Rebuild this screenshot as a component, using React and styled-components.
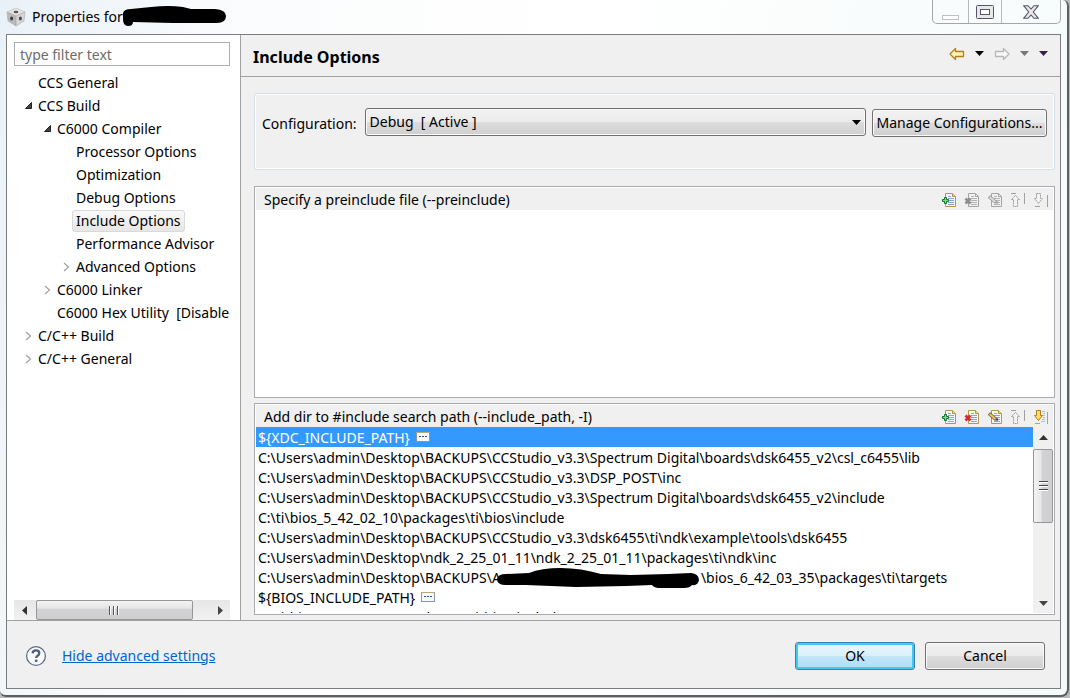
import React from 'react';
import styled, { createGlobalStyle, css } from 'styled-components';

const tree = [
    { label: 'CCS General', level: 0 },
    { label: 'CCS Build', level: 0, state: 'open' },
    { label: 'C6000 Compiler', level: 1, state: 'open' },
    { label: 'Processor Options', level: 2 },
    { label: 'Optimization', level: 2 },
    { label: 'Debug Options', level: 2 },
    { label: 'Include Options', level: 2, selected: true },
    { label: 'Performance Advisor', level: 2 },
    { label: 'Advanced Options', level: 2, state: 'closed' },
    { label: 'C6000 Linker', level: 1, state: 'closed' },
    { label: 'C6000 Hex Utility\u00a0 [Disabled]', level: 1 },
    { label: 'C/C++ Build', level: 0, state: 'closed' },
    { label: 'C/C++ General', level: 0, state: 'closed' },
];

const paths = [
    { text: '${XDC_INCLUDE_PATH}', variable: true, selected: true },
    { text: 'C:\\Users\\admin\\Desktop\\BACKUPS\\CCStudio_v3.3\\Spectrum Digital\\boards\\dsk6455_v2\\csl_c6455\\lib' },
    { text: 'C:\\Users\\admin\\Desktop\\BACKUPS\\CCStudio_v3.3\\DSP_POST\\inc' },
    { text: 'C:\\Users\\admin\\Desktop\\BACKUPS\\CCStudio_v3.3\\Spectrum Digital\\boards\\dsk6455_v2\\include' },
    { text: 'C:\\ti\\bios_5_42_02_10\\packages\\ti\\bios\\include' },
    { text: 'C:\\Users\\admin\\Desktop\\BACKUPS\\CCStudio_v3.3\\dsk6455\\ti\\ndk\\example\\tools\\dsk6455' },
    { text: 'C:\\Users\\admin\\Desktop\\ndk_2_25_01_11\\ndk_2_25_01_11\\packages\\ti\\ndk\\inc' },
    { text: 'C:\\Users\\admin\\Desktop\\BACKUPS\\', hidden: true, rest: '\\bios_6_42_03_35\\packages\\ti\\targets' },
    { text: '${BIOS_INCLUDE_PATH}', variable: true },
    { text: 'C:\\ti\\bios_6_50_01_12\\packages\\ti\\bios\\include' },
];

function Cube() {
    return (
        <svg width="20" height="20" viewBox="0 0 20 20" aria-hidden="true">
            <path d="M10 1 19 5 10 9 1 5z" fill="#e4e4e4" stroke="#bbb" strokeWidth=".6" />
            <path d="M1 5 10 9V19L2 14z" fill="#b9b9b9" stroke="#aaa" strokeWidth=".6" />
            <path d="M19 5 10 9V19L18 14z" fill="#d5d5d5" stroke="#aaa" strokeWidth=".6" />
            <ellipse cx="10" cy="5" rx="2.4" ry="1.2" fill="#555" />
            <ellipse cx="5.6" cy="11.5" rx="1.5" ry="2" fill="#3c3c3c" />
            <ellipse cx="14.4" cy="11.5" rx="1.5" ry="2" fill="#4a4a4a" />
        </svg>
    );
}

function Arrow({ left, stroke, fill }) {
    return (
        <svg width="16" height="14" viewBox="0 0 16 14" aria-hidden="true">
            <path
                d={left ? 'M1 7 6.5 1.5V4.5H14.5V9.5H6.5V12.5z' : 'M15 7 9.5 1.5V4.5H1.5V9.5H9.5V12.5z'}
                fill={fill} stroke={stroke} strokeWidth="1.3" strokeLinejoin="round"
            />
        </svg>
    );
}

function Triangle({ dir = 'down', color = '#000' }) {
    const d = {
        down: 'M0 2H9L4.5 7z',
        up: 'M0 7H9L4.5 2z',
        left: 'M7 0V9L2 4.5z',
        right: 'M2 0V9L7 4.5z',
    };
    return <svg width="9" height="9" viewBox="0 0 9 9" aria-hidden="true"><path d={d[dir]} fill={color} /></svg>;
}

function Page({ off }) {
    return (
        <>
            <path d="M4.5 1.5H11.5L14.5 4.5V14.5H4.5z" fill={off ? '#f0f0f0' : '#f3f7fd'} stroke={off ? '#a5a5a5' : '#b3954e'} />
            <path d="M11.5 1.5V4.5H14.5" fill={off ? 'none' : '#eed48b'} stroke={off ? '#a5a5a5' : '#b3954e'} />
            <path d="M7 4.5H10M7 6.5H13M7 8.5H13M7 10.5H13M7 12.5H13" stroke={off ? '#b4b4b4' : '#8ba5d2'} />
        </>
    );
}

function ToolIcon({ kind, off }) {
    const gray = '#a0a0a0';
    return (
        <svg width="16" height="16" viewBox="0 0 16 16" aria-hidden="true">
            {(kind === 'add' || kind === 'delete' || kind === 'edit') && <Page off={off} />}
            {kind === 'add' && (
                <path d="M3.5 5.5H5.5V7.5H7.5V9.5H5.5V11.5H3.5V9.5H1.5V7.5H3.5z" fill="#7be07c" stroke="#15702a" />
            )}
            {kind === 'delete' && (
                <path d="M1.5 6.5 6.5 11.5M6.5 6.5 1.5 11.5" stroke={off ? '#8e8e8e' : '#d62c38'} strokeWidth="2.8" />
            )}
            {kind === 'edit' && (
                <>
                    <path d="M2 4.5 9 10.5" stroke={off ? '#969696' : '#7b5626'} strokeWidth="3.6" />
                    <path d="M2.5 5 8.5 10" stroke={off ? '#dedede' : '#eec66c'} strokeWidth="1.8" />
                    <path d="M8 11.5H11V9z" fill={off ? gray : '#333'} />
                </>
            )}
            {kind === 'up' && (
                <>
                    <path d="M5.5 3.5 9.5 7.5H7.5V14.5H3.5V7.5H1.5z" fill="#f3f3f3" stroke={gray} strokeDasharray="2 .6" />
                    <path d="M1 1.5H6M14.5 1V12" stroke={gray} />
                </>
            )}
            {kind === 'down' && (
                <>
                    {!off && <path d="M9 2.5H12M10 4.5H12M10 6.5H12M10 8.5H12M9 10.5H12M8 12.5H12" stroke="#a9bfe0" />}
                    <path
                        d="M3.5 1.5H7.5V6.5H9.5L5.5 11.5 1.5 6.5H3.5z"
                        fill={off ? '#f3f3f3' : '#ffdc6c'} stroke={off ? gray : '#b97b13'} strokeDasharray={off ? '2 .6' : undefined}
                    />
                    <path d="M2 14.5H7M14.5 3V15" stroke={off ? gray : '#8aa6cf'} />
                </>
            )}
        </svg>
    );
}

function VarBadge() {
    return (
        <svg width="14" height="10" viewBox="0 0 14 10" role="img" aria-label="variable">
            <rect x=".5" y=".5" width="13" height="9" fill="#f6f9ff" stroke="#8b95a8" />
            <path d="M0 .5H14" stroke="#b9a878" />
            <path d="M3 4.5H5M6 4.5H8M9 4.5H11" stroke="#2d4c8c" />
        </svg>
    );
}

function ToolBar({ icons }) {
    return (
        <Tools>
            {icons.map(({ kind, off, label }) => (
                <IconButton key={kind} aria-label={label} disabled={off}><ToolIcon kind={kind} off={off} /></IconButton>
            ))}
        </Tools>
    );
}

const toolset = (empty) => [
    { kind: 'add', label: 'Add' },
    { kind: 'delete', label: 'Delete', off: empty },
    { kind: 'edit', label: 'Edit', off: empty },
    { kind: 'up', label: 'Move up', off: true },
    { kind: 'down', label: 'Move down', off: empty },
];

function TitleBar() {
    return (
        <Title>
            <Cube />
            <TitleText>Properties for</TitleText>
            <svg width="104" height="22" viewBox="0 0 104 22" aria-hidden="true">
                <path d="M0 7Q1 3 8 3L28 1Q46 -1 60 1L68 3H92Q103 4 103 10 103 17 94 17L50 17 10 16Q10 20 5 20 0 20 0 13z" />
            </svg>
            <Captions>
                <CaptionButton $w={35} aria-label="Minimize">
                    <svg width="18" height="18" viewBox="0 0 18 18"><rect x=".5" y="12.5" width="16" height="4" fill="#fff" stroke="#bfbfc3" /></svg>
                </CaptionButton>
                <CaptionButton $w={33} aria-label="Maximize">
                    <svg width="18" height="14" viewBox="0 0 18 14">
                        <rect x=".5" y=".5" width="17" height="13" rx="1" fill="#e8e8ea" stroke="#55566a" />
                        <rect x="4.5" y="4.5" width="9" height="5" fill="#fff" stroke="#55566a" />
                    </svg>
                </CaptionButton>
                <CaptionButton $w={59} aria-label="Close">
                    <svg width="16" height="14" viewBox="0 0 16 14">
                        <path d="M.7.7H5L8 4 11 .7H15.3L10.3 7 15.3 13.3H11L8 10 5 13.3H.7L5.7 7z" fill="#e8e8ea" stroke="#55566a" strokeWidth="1.1" />
                    </svg>
                </CaptionButton>
            </Captions>
        </Title>
    );
}

function SideBar() {
    return (
        <Side>
            <Filter type="text" placeholder="type filter text" aria-label="type filter text" />
            <Tree role="tree">
                {tree.map(({ label, level, state, selected }) => (
                    <TreeRow key={label} $level={level} role="treeitem" aria-selected={!!selected}>
                        <Twisty>
                            {state === 'open' && <svg width="7" height="7" viewBox="0 0 7 7"><path d="M6.5.5V6.5H.5z" fill="#444" stroke="#222" /></svg>}
                            {state === 'closed' && <svg width="7" height="10" viewBox="0 0 7 10"><path d="M1 1 5.5 5 1 9" fill="none" stroke="#a2a2a2" strokeWidth="1.2" /></svg>}
                        </Twisty>
                        <TreeLabel $selected={selected}>{label}</TreeLabel>
                    </TreeRow>
                ))}
            </Tree>
            <HScroll>
                <ScrollArrow aria-label="Scroll left"><Triangle dir="left" color="#333" /></ScrollArrow>
                <HThumb><svg width="11" height="9" viewBox="0 0 11 9"><path d="M.5 0V9M4.5 0V9M8.5 0V9" stroke="#555" /><path d="M1.5 0V9M5.5 0V9M9.5 0V9" stroke="#fff" /></svg></HThumb>
                <Spring />
                <ScrollArrow aria-label="Scroll right"><Triangle dir="right" color="#444" /></ScrollArrow>
            </HScroll>
        </Side>
    );
}

function IncludeList() {
    return (
        <ListArea>
            <List>
                {paths.map(({ text, variable, selected, hidden, rest }) => (
                    <ListRow key={text} $selected={selected}>
                        {text}
                        {variable && <VarBadge />}
                        {hidden && (
                            <Redacted>
                                A
                                <svg width="204" height="22" viewBox="0 0 204 22" aria-hidden="true">
                                    <path d="M1 11Q2 6 10 6L33 5Q45 0 65 0 85 0 105 6L135 7 172 6 195 5Q203 6 203 12 202 18 196 17 194 20 188 20H162Q157 19 156 17L130 18 80 19 30 17 10 17Q1 17 1 11z" />
                                </svg>
                            </Redacted>
                        )}
                        {rest}
                    </ListRow>
                ))}
            </List>
            <VScroll>
                <ScrollArrow aria-label="Scroll up"><Triangle dir="up" color="#333" /></ScrollArrow>
                <VThumb><svg width="9" height="11" viewBox="0 0 9 11"><path d="M0 .5H9M0 4.5H9M0 8.5H9" stroke="#444" /><path d="M0 1.5H9M0 5.5H9M0 9.5H9" stroke="#fff" /></svg></VThumb>
                <Spring />
                <ScrollArrow aria-label="Scroll down"><Triangle dir="down" color="#444" /></ScrollArrow>
            </VScroll>
        </ListArea>
    );
}

function App() {
    return (
        <>
            <GlobalStyle />
            <Window>
                <TitleBar />
                <Client>
                    <Body>
                        <SideBar />
                        <Main>
                            <PageHeader>
                                <h1>Include Options</h1>
                                <HeaderTools>
                                    <IconButton aria-label="Back"><Arrow left stroke="#b9800f" fill="#fff4bd" /></IconButton>
                                    <IconButton aria-label="Back history"><Triangle /></IconButton>
                                    <IconButton aria-label="Forward"><Arrow stroke="#b8b8b8" fill="#f8f8f8" /></IconButton>
                                    <IconButton aria-label="Forward history"><Triangle color="#777" /></IconButton>
                                    <IconButton aria-label="Menu"><Triangle color="#33204f" /></IconButton>
                                </HeaderTools>
                            </PageHeader>
                            <Content>
                                <ConfigBox>
                                    <label htmlFor="config">Configuration:</label>
                                    <SelectWrap>
                                        <Select id="config">
                                            <option>{'Debug\u00a0 [ Active ]'}</option>
                                        </Select>
                                        <SelectArrow><Triangle /></SelectArrow>
                                    </SelectWrap>
                                    <ConfigButton>Manage Configurations...</ConfigButton>
                                </ConfigBox>
                                <Panel>
                                    <PanelHead>
                                        <h2>Specify a preinclude file (--preinclude)</h2>
                                        <ToolBar icons={toolset(true)} />
                                    </PanelHead>
                                    <ListArea />
                                </Panel>
                                <Panel>
                                    <PanelHead>
                                        <h2>Add dir to #include search path (--include_path, -I)</h2>
                                        <ToolBar icons={toolset(false)} />
                                    </PanelHead>
                                    <IncludeList />
                                </Panel>
                            </Content>
                        </Main>
                    </Body>
                    <Footer>
                        <HelpButton aria-label="Help">
                            <svg width="22" height="22" viewBox="0 0 22 22">
                                <circle cx="11" cy="11" r="9.4" fill="#fafbfd" stroke="#5f6b8b" strokeWidth="1.3" />
                                <path d="M7.6 8.4Q7.8 5.4 11 5.4 14.3 5.4 14.3 8.2 14.3 9.7 12.6 10.7 11.2 11.5 11.2 13" fill="none" stroke="#4f5d83" strokeWidth="2.3" />
                                <circle cx="11.2" cy="15.8" r="1.4" fill="#4f5d83" />
                            </svg>
                        </HelpButton>
                        <a href="#advanced">Hide advanced settings</a>
                        <Spring />
                        <DialogButton $primary>OK</DialogButton>
                        <DialogButton>Cancel</DialogButton>
                    </Footer>
                </Client>
            </Window>
        </>
    );
}

export default App;

const GlobalStyle = createGlobalStyle`
    * {
        box-sizing: border-box;
    }

    body {
        margin: 0;
        background: #b9bbbd;
        color: #000;
        font: 14px/20px "Noto Sans", "Open Sans", sans-serif;
    }

    h1, h2 {
        margin: 0;
        font-size: 14px;
        font-weight: 400;
    }

    button, input, select {
        font: inherit;
        color: inherit;
    }

    svg {
        display: block;
        flex: none;
    }
`;

const Window = styled.div`
    display: flex;
    flex-direction: column;
    height: calc(100vh - 1px);
    margin-right: 1px;
    padding: 0 6px 6px;
    border: solid #5c6062;
    border-width: 0 2px 2px 0;
    border-radius: 0 6px 8px 6px;
    background: linear-gradient(100deg, #e9f1f8 0, #fbfcfd 20%, #fff 50%, #f4fafa 100%);
`;

const Title = styled.header`
    display: flex;
    align-items: center;
    flex: none;
    height: 34px;
`;

const TitleText = styled.span`
    margin-left: 6px;
`;

const Captions = styled.div`
    display: flex;
    align-self: flex-start;
    margin-left: auto;
    border: 1px solid #a6a6aa;
    border-top: 0;
    border-radius: 0 0 5px 5px;
`;

const CaptionButton = styled.button`
    display: flex;
    align-items: center;
    justify-content: center;
    width: ${({ $w }) => $w}px;
    height: 23px;
    padding: 0;
    border: 0;
    background: transparent;

    & + & {
        border-left: 1px solid #b9b9bc;
    }
`;

const Client = styled.div`
    display: flex;
    flex-direction: column;
    flex: 1;
    min-height: 0;
    border: 1px solid #7c7c80;
    background: #f0f0f0;
`;

const Body = styled.div`
    display: flex;
    flex: 1;
    min-height: 0;
    border-bottom: 1px solid #a0a0a0;
`;

const Side = styled.aside`
    display: flex;
    flex-direction: column;
    flex: none;
    width: 234px;
    padding: 7px 10px 0 7px;
    border-right: 1px solid #a0a0a0;
    background: #fff;
`;

const Filter = styled.input`
    width: 100%;
    height: 24px;
    padding: 0 5px;
    border: 1px solid #abadb3;
    background: #fff;

    &::placeholder {
        color: #6d6d6d;
    }
`;

const Tree = styled.ul`
    flex: 1;
    min-height: 0;
    margin: 5px 0 0;
    padding: 0;
    overflow: hidden;
    list-style: none;
`;

const TreeRow = styled.li`
    display: flex;
    align-items: center;
    height: 23px;
    padding-left: ${({ $level }) => 8 + $level * 19}px;
    white-space: nowrap;
`;

const Twisty = styled.span`
    display: flex;
    justify-content: center;
    flex: none;
    width: 12px;
`;

const TreeLabel = styled.span`
    padding: 0 3px;
    border: 1px solid transparent;
    border-radius: 3px;

    ${({ $selected }) => $selected && css`
        border-color: #d9d9d9;
        background: linear-gradient(#f9f9f9, #e6e6e6);
    `}
`;

const Spring = styled.span`
    flex: 1;
`;

const ScrollArrow = styled.button`
    display: flex;
    align-items: center;
    justify-content: center;
    flex: none;
    width: 20px;
    height: 20px;
    padding: 0;
    border: 0;
    background: transparent;
`;

const HScroll = styled.div`
    display: flex;
    flex: none;
    height: 20px;
    background: linear-gradient(#e6e6e6, #f2f2f2);
`;

const thumb = css`
    display: flex;
    align-items: center;
    justify-content: center;
    flex: none;
    border: 1px solid #979797;
    border-radius: 2px;
`;

const HThumb = styled.div`
    ${thumb}
    width: 157px;
    margin-left: 2px;
    background: linear-gradient(#f3f3f3 0, #e6e6e8 40%, #d2d2d5 45%, #cfcfd2 100%);
`;

const VThumb = styled.div`
    ${thumb}
    height: 74px;
    margin-top: 2px;
    background: linear-gradient(90deg, #f3f3f3 0, #e6e6e8 40%, #d2d2d5 45%, #cfcfd2 100%);
`;

const Main = styled.main`
    display: flex;
    flex-direction: column;
    flex: 1;
    min-width: 0;
`;

const PageHeader = styled.div`
    display: flex;
    align-items: center;
    justify-content: space-between;
    flex: none;
    height: 42px;
    padding: 0 12px;
    border-bottom: 1px solid #a0a0a0;

    h1 {
        padding-top: 3px;
        font-size: 16px;
        font-weight: 700;
    }
`;

const HeaderTools = styled.div`
    display: flex;
    align-items: center;
    gap: 10px;
    padding-bottom: 4px;
`;

const IconButton = styled.button`
    display: flex;
    padding: 0;
    border: 0;
    background: transparent;
`;

const Content = styled.div`
    display: flex;
    flex-direction: column;
    flex: 1;
    min-height: 0;
    padding: 16px 5px 5px 13px;
`;

const ConfigBox = styled.section`
    display: flex;
    align-items: flex-start;
    flex: none;
    height: 77px;
    margin-bottom: 16px;
    padding: 14px 7px 0;
    border: 1px solid #d5dfe5;
    border-radius: 3px;
    box-shadow: inset 0 0 0 1px #fff;
    line-height: 32px;

    label {
        margin-right: 8px;
    }
`;

const button = css`
    height: 28px;
    padding: 0 3px;
    border: 1px solid #707070;
    border-radius: 3px;
    background: linear-gradient(#f2f2f2 0, #ebebeb 49%, #dddddd 50%, #cfcfcf 100%);
    box-shadow: inset 0 0 0 1px #fafafa;
    line-height: 20px;
    white-space: nowrap;
`;

const SelectWrap = styled.div`
    position: relative;
    flex: 1;
    line-height: 20px;
`;

const Select = styled.select`
    ${button}
    display: block;
    width: 100%;
    padding-left: 4px;
    appearance: none;
`;

const SelectArrow = styled.span`
    position: absolute;
    top: 10px;
    right: 5px;
    pointer-events: none;
`;

const ConfigButton = styled.button`
    ${button}
    width: 175px;
    margin: 1px 0 0 6px;
`;

const Panel = styled.section`
    display: flex;
    flex-direction: column;
    flex: 1;
    min-height: 0;
    padding: 1px;
    border: 1px solid #a9abb1;
    background: #fff;

    & + & {
        margin-top: 5px;
    }
`;

const PanelHead = styled.div`
    display: flex;
    align-items: center;
    justify-content: space-between;
    flex: none;
    height: 22px;
    padding: 2px 4px 0 8px;
    background: #f0f0f0;
`;

const Tools = styled.div`
    display: flex;
    gap: 7px;
`;

const ListArea = styled.div`
    display: flex;
    flex: 1;
    min-height: 0;
`;

const List = styled.ul`
    flex: 1;
    min-width: 0;
    margin: 0;
    padding: 0;
    overflow: hidden;
    list-style: none;
`;

const ListRow = styled.li`
    display: flex;
    align-items: center;
    height: 20px;
    padding: 2px 0 0 2px;
    color: ${({ $selected }) => ($selected ? '#fff' : '#000')};
    background: ${({ $selected }) => ($selected ? '#3399ff' : 'none')};
    white-space: nowrap;

    & > svg {
        margin: 0 0 2px 6px;
    }
`;

const Redacted = styled.span`
    position: relative;
    width: 209px;

    svg {
        position: absolute;
        top: 0;
        left: 4px;
    }
`;

const VScroll = styled.div`
    display: flex;
    flex-direction: column;
    flex: none;
    width: 20px;
    background: #f0f0f0;
`;

const Footer = styled.footer`
    display: flex;
    align-items: center;
    gap: 10px;
    flex: none;
    height: 67px;
    padding: 2px 15px 0 18px;

    a {
        margin-left: 5px;
        color: #0066cc;
    }
`;

const HelpButton = styled(IconButton)`
    border-radius: 50%;
`;

const DialogButton = styled.button`
    ${button}
    width: 120px;

    ${({ $primary }) => $primary && css`
        border-color: #3c7fb1;
        background: linear-gradient(#e9f6fd 0, #dcf0fb 49%, #c2e6fa 50%, #b0dcf5 100%);
        box-shadow: inset 0 0 0 2px #41c8f5;
    `}
`;
